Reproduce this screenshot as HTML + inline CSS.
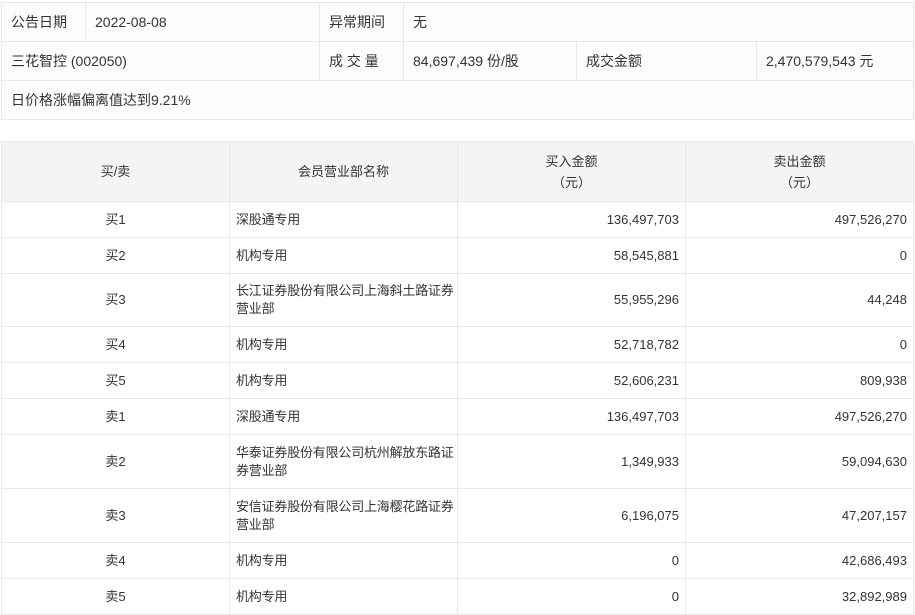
<!DOCTYPE html>
<html><head><meta charset="utf-8"><style>
body{margin:0;background:#fff;font-family:"Liberation Sans","Noto Sans CJK SC",sans-serif;color:#333;}
table{border-collapse:collapse;table-layout:fixed;position:absolute;}
td{border:1px solid #e8e8e8;padding:0 9px;box-sizing:border-box;}
#t1{left:1px;top:2px;width:912px;background:#fcfcfa;font-size:14px;}
#t1 td{height:39px;}
#t2{left:1px;top:141px;width:912px;font-size:13px;}
#t2 th{background:#f4f4f4;border:1px solid #e8e8e8;font-weight:normal;height:60px;line-height:21px;padding:0;box-sizing:border-box;}
#t2 td{line-height:18px;}
#t2 td.n{padding:0 0 0 6px;letter-spacing:-0.2px;}
.c{text-align:center}.r{text-align:right;padding-right:6px}
</style></head><body>
<table id="t1">
<colgroup><col style="width:84px"><col style="width:234px"><col style="width:84px"><col style="width:173px"><col style="width:180px"><col style="width:157px"></colgroup>
<tr><td>公告日期</td><td>2022-08-08</td><td>异常期间</td><td colspan="3">无</td></tr>
<tr><td colspan="2">三花智控 (002050)</td><td>成 交 量</td><td>84,697,439 份/股</td><td>成交金额</td><td>2,470,579,543 元</td></tr>
<tr><td colspan="6">日价格涨幅偏离值达到9.21%</td></tr>
</table>
<table id="t2">
<colgroup><col style="width:228px"><col style="width:228px"><col style="width:228px"><col style="width:228px"></colgroup>
<tr style="height:60px"><th>买/卖</th><th>会员营业部名称</th><th>买入金额<br>（元）</th><th>卖出金额<br>（元）</th></tr>
<tr style="height:36px"><td class="c">买1</td><td class="n">深股通专用</td><td class="r">136,497,703</td><td class="r">497,526,270</td></tr>
<tr style="height:36px"><td class="c">买2</td><td class="n">机构专用</td><td class="r">58,545,881</td><td class="r">0</td></tr>
<tr style="height:53px"><td class="c">买3</td><td class="n">长江证券股份有限公司上海斜土路证券营业部</td><td class="r">55,955,296</td><td class="r">44,248</td></tr>
<tr style="height:36px"><td class="c">买4</td><td class="n">机构专用</td><td class="r">52,718,782</td><td class="r">0</td></tr>
<tr style="height:36px"><td class="c">买5</td><td class="n">机构专用</td><td class="r">52,606,231</td><td class="r">809,938</td></tr>
<tr style="height:36px"><td class="c">卖1</td><td class="n">深股通专用</td><td class="r">136,497,703</td><td class="r">497,526,270</td></tr>
<tr style="height:54px"><td class="c">卖2</td><td class="n">华泰证券股份有限公司杭州解放东路证券营业部</td><td class="r">1,349,933</td><td class="r">59,094,630</td></tr>
<tr style="height:54px"><td class="c">卖3</td><td class="n">安信证券股份有限公司上海樱花路证券营业部</td><td class="r">6,196,075</td><td class="r">47,207,157</td></tr>
<tr style="height:36px"><td class="c">卖4</td><td class="n">机构专用</td><td class="r">0</td><td class="r">42,686,493</td></tr>
<tr style="height:36px"><td class="c">卖5</td><td class="n">机构专用</td><td class="r">0</td><td class="r">32,892,989</td></tr>
</table>
</body></html>
